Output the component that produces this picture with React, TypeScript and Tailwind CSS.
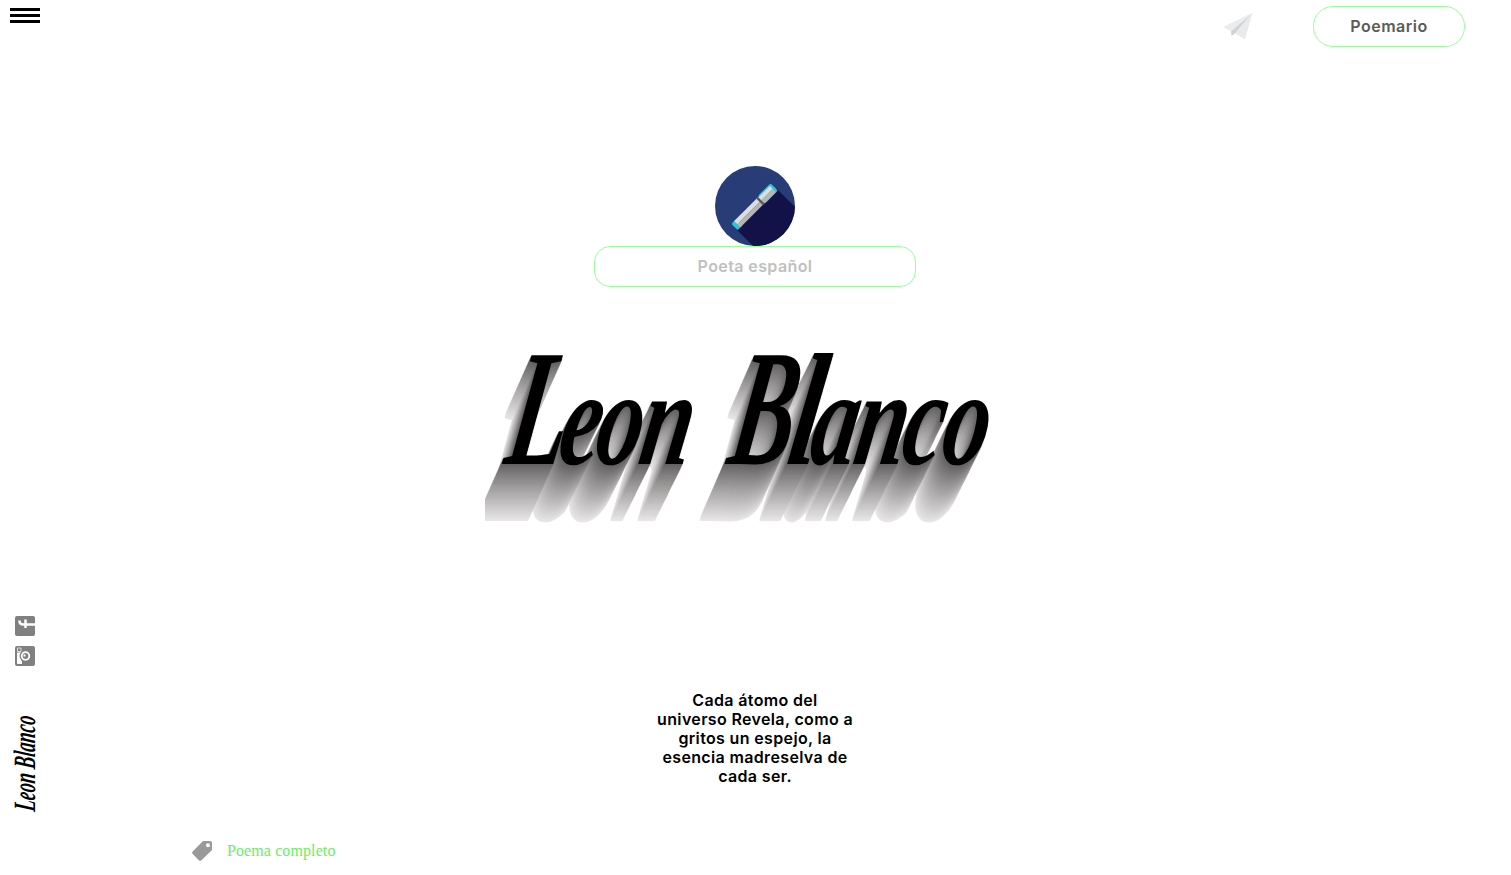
import React from 'react';

const SCALE_X = 0.68;
const SLANT = 0.17;
const DEPTH = 57;

// Stepped copies, dark to light, build the long cast shadow.
const castShadow = Array.from({ length: DEPTH }, (_, i) => {
  const y = i + 1;
  const x = (-0.49 * y + SLANT * y) / SCALE_X;
  const shade = Math.round(100 + 132 * Math.pow(i / (DEPTH - 1), 0.9));
  return `${x.toFixed(2)}px ${y}px 1px rgb(${shade},${shade - 2},${shade - 2})`;
}).join(',');

function PaperPlane() {
  return (
    <svg className="h-[30px] w-[30px]" viewBox="0 0 30 30">
      <path d="M29.500 .7 0 15l8 4.500z" fill="#ececed" />
      <path d="M29.500 .7 8 19.500l.5 4.500 4-3z" fill="#d0d2d5" />
      <path d="M29.500 .7 12 21.500l10 6z" fill="#e9eaeb" />
    </svg>
  );
}

function PenBadge() {
  return (
    <svg className="h-20 w-20" viewBox="0 0 80 80">
      <defs>
        <clipPath id="disc"><circle cx="40" cy="40" r="40" /></clipPath>
      </defs>
      <g clipPath="url(#disc)">
        <path d="M0 0h80v80H0z" fill="#283c78" />
        <path d="M61 22 100 61v39H58L22 64z" fill="#131248" />
      </g>
      <g transform="translate(19.500 61) rotate(-45)">
        <rect x="0" y="-4.500" width="7" height="9" rx="1.500" fill="#2cc4d6" />
        <path d="M4-4.500h34V0H4z" fill="#dedede" />
        <path d="M4 0h34v4.500H4z" fill="#b5b5b5" />
        <path d="M35.500-4.500h2.500v9h-2.500z" fill="#555" />
        <rect x="38" y="-5.500" width="18.500" height="10.500" rx="2.500" fill="#2cc4d6" />
        <path d="M38-4h16V0H38z" fill="#dedede" />
        <path d="M38 0h16v4.500H38z" fill="#b5b5b5" />
      </g>
    </svg>
  );
}

function FacebookIcon() {
  return (
    <svg className="h-5 w-5" viewBox="0 0 20 20">
      <rect width="20" height="20" rx="2" fill="#808080" />
      <path d="M20 8.500H8.500C5.500 8.500 4.500 7.500 4.500 4.500" fill="none" stroke="#fff" strokeWidth="2.600" />
      <path d="M10.500 3.500V12" stroke="#fff" strokeWidth="2.500" />
    </svg>
  );
}

function CameraIcon() {
  return (
    <svg className="h-5 w-5" viewBox="0 0 20 20">
      <rect width="20" height="20" rx="2" fill="#808080" />
      <path d="M2 6.500h3V6l2 1v11H3a1 1 0 0 1-1-1z" fill="#fff" />
      <path d="M2.500 2h3.500v3.500H2.500z" fill="none" stroke="#ddd" />
      <circle cx="10.500" cy="10" r="6" fill="#808080" />
      <circle cx="10.500" cy="10" r="4.700" fill="#fff" />
      <circle cx="10.500" cy="10" r="2.900" fill="#808080" />
      <path d="M8.500 8.500h2v2h-2z" fill="#fff" />
    </svg>
  );
}

function TagIcon() {
  return (
    <svg className="h-5 w-5" viewBox="0 0 20 20">
      <path fillRule="evenodd" d="M11 0h7a2 2 0 0 1 2 2v7L9.500 19.300a2 2 0 0 1-2.600 0L.7 13a2 2 0 0 1 0-2.600zM16 2.300a2 2 0 1 0 0 4 2 2 0 0 0 0-4" fill="#999" />
    </svg>
  );
}

export default function App() {
  return (
    <div className="flex h-[875px] w-full overflow-hidden bg-white font-['Inter',sans-serif]">
      <aside className="flex w-[50px] shrink-0 flex-col pt-2">
        <button aria-label="Menu" className="ml-2.5 flex w-[30px] flex-col gap-[3px]">
          <span className="h-[3px] bg-black" />
          <span className="h-[3px] bg-black" />
          <span className="h-[3px] bg-black" />
        </button>
        <div className="mt-[593px] ml-[15px] flex flex-col gap-2.5">
          <FacebookIcon />
          <CameraIcon />
        </div>
        <div className="mt-[47px] ml-[11px] flex h-[99px] w-7 items-center justify-center">
          <span className="shrink-0 -rotate-90 scale-x-[0.58] -skew-x-12 whitespace-nowrap font-['Liberation_Serif',serif] text-[31px] leading-7 font-bold italic text-black">
            Leon Blanco
          </span>
        </div>
      </aside>

      <main className="flex min-w-0 flex-1 flex-col">
        <header className="flex justify-end gap-[60px] pt-1.5 pr-[46px]">
          <div className="pt-1.5"><PaperPlane /></div>
          <button className="h-[41px] w-[152px] rounded-[20px] border border-[#99ff99] pb-0.5 text-[16px] font-semibold tracking-[0.5px] text-[#5b5b5b]">
            Poemario
          </button>
        </header>

        <section className="mt-[119px] flex flex-col items-center pr-[51px]">
          <PenBadge />
          <div className="flex h-[41px] w-[322px] items-center justify-center rounded-[16px] border border-[#99ff99] pb-0.5 text-[16px] font-semibold tracking-[0.4px] text-[#c0c0c0]">
            Poeta español
          </div>
        </section>

        <div className="mt-[43px] ml-[435px] h-[200px] w-[530px] overflow-hidden">
          <h1
            className="-mt-3 origin-[0_145px] pl-[26px] font-['Liberation_Serif',serif] text-[136px] leading-[180px] font-bold whitespace-nowrap text-black italic"
            style={{ transform: `matrix(${SCALE_X},0,${-SLANT},1,0,0)`, textShadow: castShadow }}
          >
            <span className="relative z-10 -mr-[24px] inline-block origin-bottom-left scale-x-[0.86] text-[166px] leading-[180px]">L</span>
            <span className="relative z-9 -mr-[6px]">e</span>
            <span className="relative z-8 -mr-[3px]">o</span>
            <span className="relative z-7 mr-[22px]">n </span>
            <span className="relative z-6 -mr-[24px] inline-block origin-bottom-left scale-x-[0.84] text-[166px] leading-[180px]">B</span>
            <span className="relative z-5 -mr-[12px] text-[160px] leading-[180px]">l</span>
            <span className="relative z-4 -mr-[3px]">a</span>
            <span className="relative z-3 -mr-[6px]">n</span>
            <span className="relative z-2 -mr-[2px]">c</span>
            <span className="relative z-1">o</span>
          </h1>
        </div>

        <p className="mt-[161px] ml-[595px] w-[220px] text-center text-[16px] leading-[19px] font-semibold tracking-[0.35px] text-black">
          Cada átomo del<br />universo Revela, como a<br />gritos un espejo, la<br />esencia madreselva de<br />cada ser.
        </p>

        <a className="mt-[55px] ml-[142px] flex items-center gap-[15px] font-['Liberation_Serif',serif] text-[16px] leading-5 tracking-[0.1px] text-[#66ee66]">
          <TagIcon />
          <span>Poema completo</span>
        </a>
      </main>
    </div>
  );
}
